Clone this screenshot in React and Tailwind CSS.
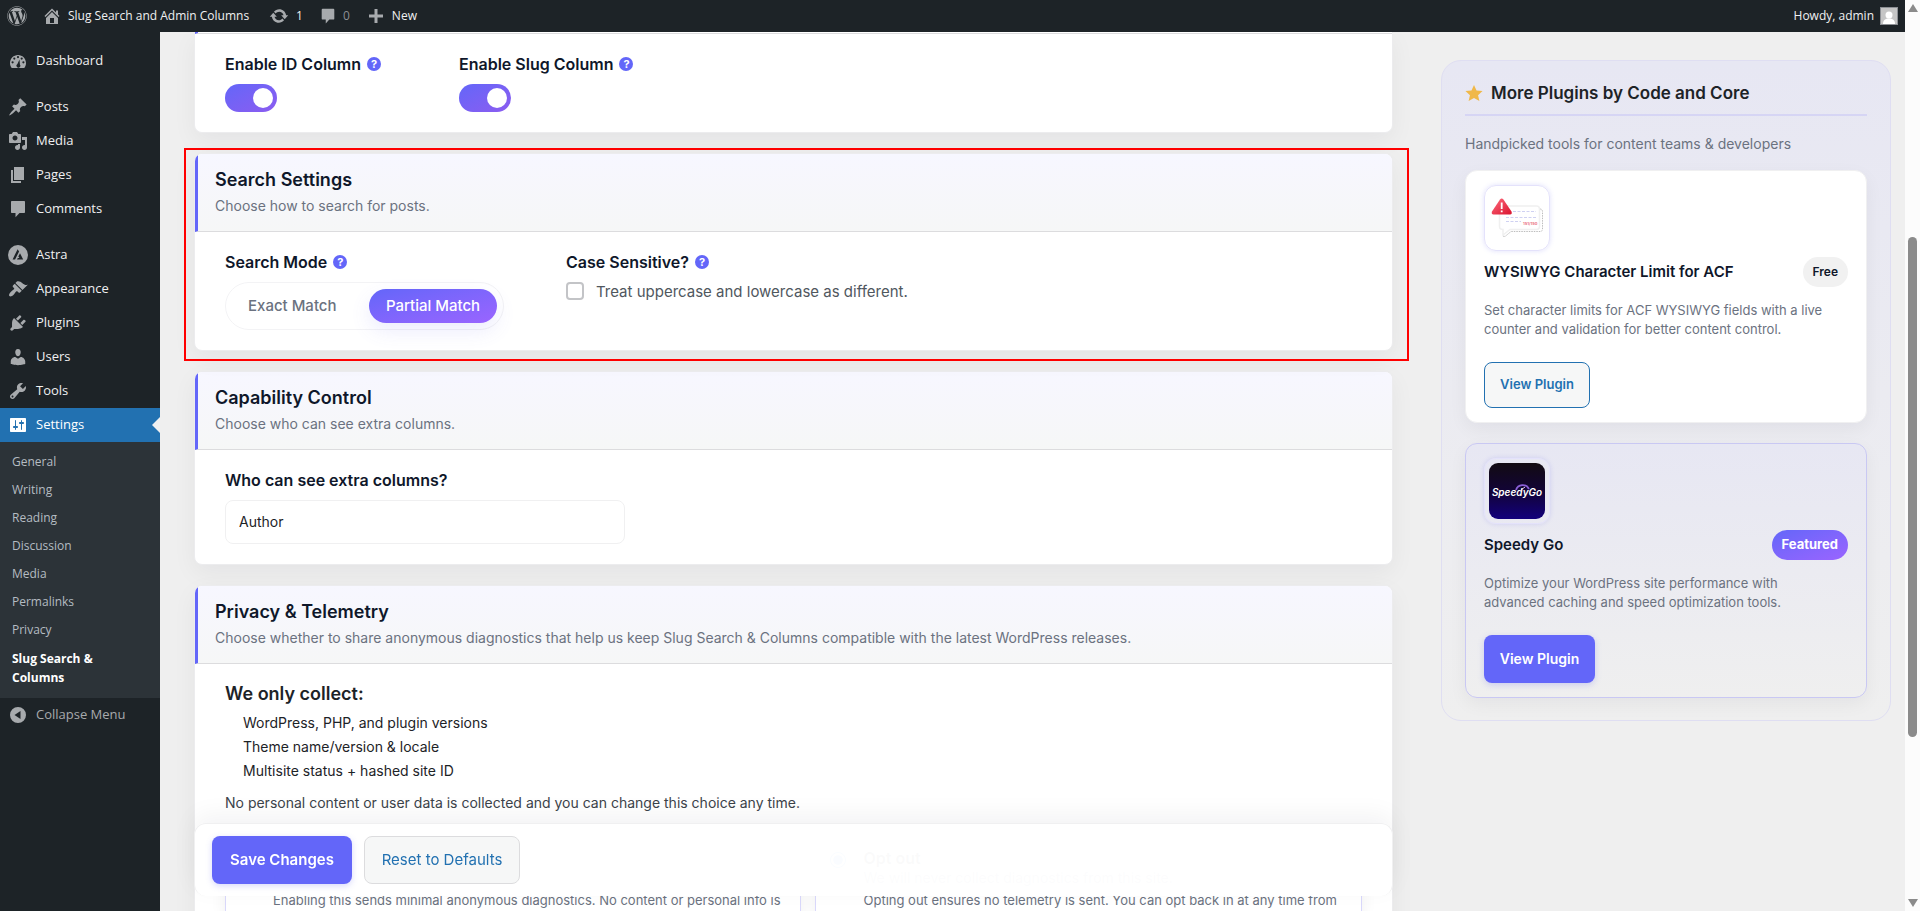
import { FaWordpress } from 'react-icons/fa';

// 20x20 admin glyphs, keyed by the menu entry that uses them
const ICONS = {
  home: 'M16 8.5l1.53 1.53-1.06 1.06L10 4.6l-6.47 6.49-1.06-1.06L10 2.5l4 4v-2h2v4zm-6-2.46l6 5.99V18H4v-5.97zM12 17v-5H8v5h4z',
  update: 'M10.2 3.28c3.53 0 6.43 2.61 6.92 6h2.08l-3.5 4-3.5-4h2.32c-.45-1.97-2.21-3.45-4.32-3.45-1.45 0-2.73.71-3.54 1.78L4.95 5.66C6.23 4.2 8.11 3.28 10.2 3.28zm-.4 13.44c-3.52 0-6.43-2.61-6.92-6H.8l3.5-4c1.17 1.33 2.33 2.67 3.5 4H5.48c.45 1.97 2.21 3.45 4.32 3.45 1.45 0 2.73-.71 3.54-1.78l1.71 1.95c-1.28 1.46-3.15 2.38-5.25 2.38z',
  plus: 'M17 8.5v3h-5.500v5.500h-3v-5.500H3v-3h5.500V3h3v5.500z',
  dashboard: 'M3.760 17h12.480C17.340 15.630 18 13.890 18 12c0-4.410-3.580-8-8-8s-8 3.590-8 8c0 1.890.66 3.630 1.760 5zM10 5a1.100 1.100 0 1 1 0 2.200A1.100 1.100 0 0 1 10 5zM6.300 6.500a1.100 1.100 0 1 1 0 2.200 1.100 1.100 0 0 1 0-2.200zM13.700 6.500a1.100 1.100 0 1 1 0 2.200 1.100 1.100 0 0 1 0-2.200zM4.600 10.200a1.100 1.100 0 1 1 0 2.200 1.100 1.100 0 0 1 0-2.200zM15.400 10.200a1.100 1.100 0 1 1 0 2.200 1.100 1.100 0 0 1 0-2.200zM11.500 8.500l.4 4.900a2 2 0 1 1-2.500-.4z',
  posts: 'M10.440 3.020l1.820-1.820 6.360 6.350-1.830 1.820c-1.050-.68-2.480-.57-3.410.36l-.75.75c-.92.93-1.040 2.350-.35 3.410l-1.830 1.820-2.410-2.410-2.800 2.790c-.42.42-3.380 2.710-3.800 2.290s1.860-3.390 2.280-3.810l2.790-2.790L4.100 9.360l1.830-1.820c1.050.69 2.480.57 3.400-.36l.75-.75c.93-.92 1.050-2.350.36-3.410z',
  media: 'M13 11V4c0-.55-.45-1-1-1h-1.670L9 1H5L3.670 3H2c-.55 0-1 .45-1 1v7c0 .55.45 1 1 1h10c.55 0 1-.45 1-1zM7 4.500c1.380 0 2.500 1.120 2.500 2.500S8.380 9.500 7 9.500 4.500 8.380 4.500 7 5.620 4.500 7 4.500zM14 6h5v10.500c0 1.380-1.120 2.500-2.500 2.500S14 17.880 14 16.500s1.120-2.500 2.500-2.500c.17 0 .34.02.5.05V9h-3V6zm-4 8.050V13h2v3.500c0 1.380-1.120 2.500-2.500 2.500S7 17.880 7 16.500 8.120 14 9.500 14c.17 0 .34.02.5.05z',
  pages: 'M6 15V2h10v13H6zm-1 1h8v2H3V5h2v11z',
  comments: 'M4 2h12c.6 0 1 .4 1 1v10c0 .6-.4 1-1 1h-4.500L7.500 18.300V14H4c-.6 0-1-.4-1-1V3c0-.6.4-1 1-1z',
  astra: 'M10 0a10 10 0 1 1 0 20 10 10 0 0 1 0-20zM9.600 4.200L4.600 14.400h2.500l4-8zM12 8.200l-1.700 3.400 1.200 1.300h-1.700l-.8 1.500h6.200z',
  appearance: 'M14.480 11.060L7.410 3.990l1.500-1.500c.5-.56 2.300-.47 3.510.32 1.210.8 1.430 1.280 2.910 2.100 1.180.64 2.450 1.260 4.450.85zm-.71.71L6.700 4.700 4.930 6.470c-.39.39-.39 1.020 0 1.410l1.060 1.060c.39.39.39 1.030 0 1.420-.6.6-1.430 1.110-2.210 1.690-.35.26-.7.53-1.010.84C1.430 14.230.4 16.080 1.400 17.070c.99 1 2.840-.03 4.180-1.360.31-.31.58-.66.85-1.020.57-.78 1.080-1.610 1.690-2.210.39-.39 1.020-.39 1.410 0l1.060 1.060c.39.39 1.020.39 1.410 0z',
  plugins: 'M13.110 4.360L9.870 7.600 8 5.730l3.240-3.240c.35-.34 1.050-.2 1.560.32.52.51.66 1.210.31 1.550zm-8 1.770l.91-1.120 9.010 9.010-1.190.84c-.71.71-2.630 1.160-3.820 1.160H6.140L4.900 17.260c-.59.59-1.540.59-2.120 0-.59-.58-.59-1.530 0-2.120l1.240-1.240v-3.880c0-1.130.4-3.190 1.090-3.890zm7.260 3.970l3.240-3.240c.34-.35 1.040-.21 1.550.31.52.51.66 1.210.31 1.550l-3.240 3.250z',
  users: 'M10 9.250c-2.270 0-2.730-3.440-2.730-3.440C7 4.020 7.820 2 9.970 2c2.160 0 2.980 2.020 2.710 3.810 0 0-.41 3.440-2.680 3.440zm0 2.570L12.720 10c2.390 0 4.520 2.330 4.520 4.530v2.490s-3.650 1.130-7.240 1.130c-3.650 0-7.240-1.130-7.240-1.130v-2.490c0-2.250 1.940-4.480 4.470-4.480z',
  tools: 'M16.680 9.770c-1.340 1.340-3.300 1.670-4.950.99l-5.410 6.520c-.99.99-2.590.99-3.580 0s-.99-2.590 0-3.570l6.520-5.420c-.68-1.650-.35-3.610.99-4.950 1.280-1.280 3.120-1.620 4.720-1.060l-2.890 2.890 2.820 2.820 2.860-2.870c.53 1.580.18 3.390-1.080 4.650zM3.810 16.210c.4.39 1.040.39 1.430 0 .4-.4.4-1.040 0-1.430-.39-.4-1.030-.4-1.430 0-.39.39-.39 1.030 0 1.430z',
  settings: 'M18 16V4c0-.55-.45-1-1-1H3c-.55 0-1 .45-1 1v12c0 .55.45 1 1 1h14c.55 0 1-.45 1-1zM8 11h1c.55 0 1 .45 1 1s-.45 1-1 1H8v1.500c0 .28-.22.5-.5.5s-.5-.22-.5-.5V13H6c-.55 0-1-.45-1-1s.45-1 1-1h1V5.500c0-.28.22-.5.5-.5s.5.22.5.5V11zm5-2h-1c-.55 0-1-.45-1-1s.45-1 1-1h1V5.500c0-.28.22-.5.5-.5s.5.22.5.5V7h1c.55 0 1 .45 1 1s-.45 1-1 1h-1v5.500c0 .28-.22.5-.5.5s-.5-.22-.5-.5V9z',
  collapse: 'M10 2a8 8 0 1 1 0 16 8 8 0 0 1 0-16zM12.500 6L6.500 10l6 4z',
  star: 'M10 1l2.800 6.200 6.700.7-5 4.500 1.500 6.600-6-3.400L4 19l1.500-6.600-5-4.500 6.700-.7z',
};

const MENU = [
  [{ icon: 'dashboard', label: 'Dashboard' }],
  [
    { icon: 'posts', label: 'Posts' },
    { icon: 'media', label: 'Media' },
    { icon: 'pages', label: 'Pages' },
    { icon: 'comments', label: 'Comments' },
  ],
  [
    { icon: 'astra', label: 'Astra' },
    { icon: 'appearance', label: 'Appearance' },
    { icon: 'plugins', label: 'Plugins' },
    { icon: 'users', label: 'Users' },
    { icon: 'tools', label: 'Tools' },
    { icon: 'settings', label: 'Settings', current: true },
  ],
];

const SUBMENU = ['General', 'Writing', 'Reading', 'Discussion', 'Media', 'Permalinks', 'Privacy'];

function Icon({ name, className = 'size-5' }) {
  return (
    <svg viewBox="0 0 20 20" className={`shrink-0 fill-current ${className}`} aria-hidden="true">
      <path fillRule="evenodd" d={ICONS[name]} />
    </svg>
  );
}

function AdminBar() {
  return (
    <header className="flex h-8 shrink-0 items-center bg-[#1d2327] px-[7px] text-xs text-[#f0f0f1]">
      <a href="#about" aria-label="About WordPress" className="mr-[15px] text-[#a7aaad]">
        <FaWordpress className="size-5" />
      </a>
      <a href="#site" className="mr-5 flex items-center gap-1.5">
        <Icon name="home" className="size-5 text-[#a7aaad]" />
        Slug Search and Admin Columns
      </a>
      <a href="#updates" className="mr-4 flex items-center gap-[7px]">
        <Icon name="update" className="size-5 text-[#a7aaad]" />
        1
      </a>
      <a href="#comments" className="mr-4 flex items-center gap-1.5 text-[#8c8f94]">
        <Icon name="comments" className="size-[18px] text-[#a7aaad]" />
        0
      </a>
      <a href="#new" className="flex items-center gap-1.5">
        <Icon name="plus" className="size-5 text-[#a7aaad]" />
        New
      </a>
      <a href="#profile" className="ml-auto flex items-center gap-1.5">
        Howdy, admin
        <svg viewBox="0 0 18 18" className="size-[18px]" aria-hidden="true">
          <rect width="18" height="18" fill="#8c8f94" />
          <rect x="1" y="1" width="16" height="16" fill="#c5c5c5" />
          <circle cx="9" cy="8" r="3.500" fill="#fff" />
          <path d="M3 17c0-4 2.500-5.500 6-5.500s6 1.500 6 5.500z" fill="#fff" />
        </svg>
      </a>
    </header>
  );
}

function AdminMenu() {
  return (
    <nav className="w-40 shrink-0 bg-[#1d2327] pt-3 text-[13px] text-[#f0f0f1]">
      <div className="flex flex-col gap-3">
        {MENU.map((group) => (
          <ul key={group[0].label}>
            {group.map(({ icon, label, current }) => (
              <li key={label}>
                <a
                  href="#menu"
                  className={`relative flex h-[34px] items-center gap-2 pl-2 ${current ? 'bg-[#2271b1] text-white' : ''}`}
                >
                  <Icon name={icon} className={current ? 'size-5 text-white' : 'size-5 text-[#a7aaad]'} />
                  {label}
                  {current && (
                    <span className="absolute right-0 border-y-8 border-r-8 border-y-transparent border-r-[#f0f0f1]" />
                  )}
                </a>
              </li>
            ))}
          </ul>
        ))}
      </div>
      <ul className="bg-[#2c3338] py-1.5 text-xs text-[#b5bcc2]">
        {SUBMENU.map((label) => (
          <li key={label}>
            <a href="#sub" className="flex h-7 items-center px-3">{label}</a>
          </li>
        ))}
        <li>
          <a href="#sub" className="block py-[5px] pr-10 pl-3 leading-[19px] font-bold text-white">
            Slug Search &amp; Columns
          </a>
        </li>
      </ul>
      <button type="button" className="flex h-[34px] items-center gap-2 pl-2 text-[#a7aaad]">
        <Icon name="collapse" />
        Collapse Menu
      </button>
    </nav>
  );
}

function Card({ title, subtitle, children }) {
  return (
    <section className="overflow-hidden rounded-lg border border-[#ececee] bg-white shadow-[0_8px_24px_rgba(15,23,42,0.05)]">
      <div className="border-b border-l-3 border-b-[#dcdcde] border-l-[#6366f9] bg-linear-to-b from-[#f7f7ff] to-[#f6f7f7] px-[17px] pt-3.5 pb-[15px]">
        <h2 className="text-lg leading-6 font-semibold text-[#0f172a]">{title}</h2>
        <p className="mt-1 text-sm leading-5 text-[#6b7280]">{subtitle}</p>
      </div>
      <div className="px-[30px] py-5">{children}</div>
    </section>
  );
}

function FieldLabel({ htmlFor, help = true, children }) {
  return (
    <div className="mb-2.5 flex h-5 items-center gap-1.5">
      <label htmlFor={htmlFor} className="text-base leading-5 font-semibold text-[#0f172a]">{children}</label>
      {help && (
        <span className="flex size-3.5 items-center justify-center rounded-full bg-[#6366f9] text-[11px] leading-none font-bold text-white">
          ?
        </span>
      )}
    </div>
  );
}

function Toggle({ id }) {
  return (
    <span className="relative block h-7 w-[52px] rounded-full bg-linear-to-br from-[#6366f9] to-[#8b5cf0]">
      <input id={id} type="checkbox" defaultChecked className="peer absolute inset-0 size-full cursor-pointer opacity-0" />
      <span className="pointer-events-none absolute top-1 right-1 size-5 rounded-full bg-white" />
    </span>
  );
}

function Consent({ id, title, lead, note, checked }) {
  return (
    <div className="flex gap-[17px] rounded-lg border border-[#d9d8fb] bg-white px-3.5 py-3 shadow-[0_4px_16px_rgba(15,23,42,0.06)]">
      <input id={id} type="radio" name="telemetry" defaultChecked={checked} className="mt-1.5 size-4 shrink-0" />
      <label htmlFor={id} className="block text-[13px] leading-5 text-[#6b7280]">
        <span className="block h-6 text-base leading-6 font-semibold text-[#0f172a]">{title}</span>
        <span className="mb-1 block h-4 text-sm leading-4">{lead}</span>
        <span className="block">{note}</span>
      </label>
    </div>
  );
}

function SettingsColumn() {
  return (
    <form className="relative flex min-w-0 flex-1 flex-col gap-5" onSubmit={(e) => e.preventDefault()}>
      {/* Columns card, its header scrolled under the admin bar */}
      <section className="rounded-b-lg border-x border-b border-[#ececee] bg-white shadow-[0_8px_24px_rgba(15,23,42,0.05)]">
        <div className="h-0.5 border-b border-l-3 border-b-[#dcdcde] border-l-[#6366f9]" />
        <div className="grid grid-cols-[234px_1fr] px-[30px] py-5">
          <div>
            <FieldLabel htmlFor="id-column">Enable ID Column</FieldLabel>
            <Toggle id="id-column" />
          </div>
          <div>
            <FieldLabel htmlFor="slug-column">Enable Slug Column</FieldLabel>
            <Toggle id="slug-column" />
          </div>
        </div>
      </section>

      <div className="relative">
        <Card title="Search Settings" subtitle="Choose how to search for posts.">
          <div className="grid grid-cols-[341px_1fr]">
            <div>
              <FieldLabel htmlFor="partial">Search Mode</FieldLabel>
              <div className="flex h-12 w-[279px] items-center justify-between rounded-full border border-[#f3f3f5] px-1.5 text-[15px] font-medium">
                <button type="button" className="h-[34px] px-4 text-[#6b7280]">Exact Match</button>
                <button
                  id="partial"
                  type="button"
                  className="h-[34px] w-32 rounded-full bg-linear-to-br from-[#6366f9] to-[#9a64ff] text-white shadow-[0_8px_20px_rgba(99,102,241,0.12)]"
                >
                  Partial Match
                </button>
              </div>
            </div>
            <div>
              <FieldLabel htmlFor="case-sensitive">Case Sensitive?</FieldLabel>
              <div className="flex gap-3 text-[15px] leading-5 text-[#50575e]">
                <input
                  id="case-sensitive"
                  type="checkbox"
                  className="size-[18px] appearance-none rounded border-2 border-[#c3c4c7] bg-white"
                />
                <label htmlFor="case-sensitive">Treat uppercase and lowercase as different.</label>
              </div>
            </div>
          </div>
        </Card>
        {/* highlight frame */}
        <div className="pointer-events-none absolute -top-[5px] -right-4 -bottom-2.5 -left-2.5 border-2 border-[#ff0000]" />
      </div>

      <Card title="Capability Control" subtitle="Choose who can see extra columns.">
        <FieldLabel htmlFor="capability" help={false}>Who can see extra columns?</FieldLabel>
        <select
          id="capability"
          className="block h-11 w-full max-w-[400px] appearance-none rounded-lg border border-[#f0f0f1] bg-white px-[13px] text-sm text-[#1d2327]"
        >
          <option>Author</option>
        </select>
      </Card>

      <Card
        title="Privacy & Telemetry"
        subtitle="Choose whether to share anonymous diagnostics that help us keep Slug Search & Columns compatible with the latest WordPress releases."
      >
        <h3 className="text-lg leading-5 font-semibold text-[#1d2327]">We only collect:</h3>
        <ul className="mt-[7px] pl-[18px] text-sm leading-6 text-[#1d2327]">
          <li>WordPress, PHP, and plugin versions</li>
          <li>Theme name/version &amp; locale</li>
          <li>Multisite status + hashed site ID</li>
        </ul>
        <p className="mt-2.5 text-sm leading-5 text-[#3c434a]">
          No personal content or user data is collected and you can change this choice any time.
        </p>
        <div className="mt-5 grid grid-cols-[577fr_547fr] gap-3.5">
          <Consent
            id="opt-in"
            note="Enabling this sends minimal anonymous diagnostics. No content or personal info is"
          />
          <Consent
            id="opt-out"
            checked
            title="Opt out"
            lead="We will never collect diagnostics from this site."
            note="Opting out ensures no telemetry is sent. You can opt back in at any time from"
          />
        </div>
      </Card>

      <div className="sticky bottom-[15px] z-10 flex h-[73px] shrink-0 items-center gap-3 rounded-xl border border-b-0 border-[#f0f0f1] bg-white/98 px-[17px] shadow-[0_-8px_24px_rgba(15,23,42,0.05)]">
        <button type="submit" className="h-12 w-[140px] rounded-lg bg-[#6366f9] text-[15px] font-semibold text-white shadow-[0_2px_6px_rgba(99,102,241,0.25)]">
          Save Changes
        </button>
        <button type="reset" className="h-12 w-[156px] rounded-lg border border-[#dcdcde] bg-[#f6f7f7] text-[15px] text-[#2271b1]">
          Reset to Defaults
        </button>
      </div>
    </form>
  );
}

function AcfLogo() {
  return (
    <svg viewBox="0 0 64 64" className="size-16" aria-hidden="true">
      <defs>
        <linearGradient id="warn" x1="0" y1="0" x2="1" y2="1">
          <stop offset="0" stopColor="#ff6b7d" />
          <stop offset="1" stopColor="#d9142f" />
        </linearGradient>
      </defs>
      <path d="M55 23q2.500 0 2.500 3v17q0 2.500-2.500 2.500H26l-6 5-2.500-.5" fill="none" stroke="#bdbdbd" strokeDasharray="1.500 1" />
      <path d="M18 20h33.500q3 0 3 3v17.500q0 3-3 3H25l-7 5.500v-5.500q-3.500 0-3.500-3V23q0-3 3.500-3z" fill="#fff" stroke="#f0f0f0" strokeWidth="1.500" />
      <g stroke="#cfd1f2" strokeDasharray="3 1.500">
        <path d="M28 25.500h23M21 31.500h30M21 35.500h15" />
      </g>
      <text x="38" y="39" fontSize="4" fontWeight="700" fill="#ea6f80">151/150</text>
      <path d="M15 13.500q1.700-2 3.400 0l8.100 12q1 3-1.500 3H8.500q-2.500 0-1.500-3z" fill="url(#warn)" />
      <path d="M16.700 16.500v6.500M16.700 24.500v1.800" stroke="#fff" strokeWidth="1.800" />
    </svg>
  );
}

function SpeedyGoLogo() {
  return (
    <svg viewBox="0 0 56 56" className="size-14" aria-hidden="true">
      <defs>
        <linearGradient id="night" x1="0" y1="0" x2="0" y2="1">
          <stop offset="0" stopColor="#120b12" />
          <stop offset="0.500" stopColor="#120436" />
          <stop offset="1" stopColor="#12007c" />
        </linearGradient>
      </defs>
      <rect width="56" height="56" rx="9" fill="url(#night)" />
      <path d="M27 27a7 7 0 0 1 13-1" fill="none" stroke="#8a5fd6" strokeWidth="1.800" />
      <path d="M32 27l4-3" stroke="#d9c8f5" />
      <text x="28" y="33" textAnchor="middle" fontSize="10" fontWeight="600" fontStyle="italic" fill="#fff">SpeedyGo</text>
    </svg>
  );
}

const PLUGINS = [
  {
    name: 'WYSIWYG Character Limit for ACF',
    badge: 'Free',
    logo: AcfLogo,
    text: 'Set character limits for ACF WYSIWYG fields with a live counter and validation for better content control.',
  },
  {
    name: 'Speedy Go',
    badge: 'Featured',
    featured: true,
    logo: SpeedyGoLogo,
    text: 'Optimize your WordPress site performance with advanced caching and speed optimization tools.',
  },
];

function PluginCard({ name, badge, featured, logo: Logo, text }) {
  return (
    <article
      className={`rounded-xl border px-[18px] py-3.5 shadow-[0_6px_18px_rgba(15,23,42,0.05)] ${
        featured ? 'border-[#c9c8f3] bg-linear-to-b from-[#e7e7f3] to-[#efefef]' : 'border-[#f0f0f1] bg-white'
      }`}
    >
      <div className="flex size-[66px] items-center justify-center rounded-xl border border-[#e4e2fb] shadow-[0_0_5px_rgba(99,102,241,0.2)]">
        <Logo />
      </div>
      <div className="mt-1.5 flex h-[30px] items-center justify-between">
        <h3 className="text-[15px] font-semibold text-[#0f172a]">{name}</h3>
        <span
          className={`flex h-[30px] items-center rounded-full px-2.5 ${
            featured ? 'bg-linear-to-br from-[#6366f9] to-[#9a64ff] text-[13px] font-bold text-white' : 'bg-[#f1f1f1] text-xs font-semibold text-[#0f172a]'
          }`}
        >
          {badge}
        </span>
      </div>
      <p className="mt-3.5 max-w-[350px] text-[13px] leading-[19px] text-[#6b7280]">{text}</p>
      {featured ? (
        <button type="button" className="mt-[23px] block h-12 w-[111px] rounded-lg bg-[#6366f9] text-sm font-semibold text-white shadow-[0_2px_6px_rgba(99,102,241,0.25)]">
          View Plugin
        </button>
      ) : (
        <button type="button" className="mt-[23px] block h-[46px] w-[106px] rounded-lg border border-[#2271b1] bg-[#f6f7f7] text-[13px] font-semibold text-[#2271b1]">
          View Plugin
        </button>
      )}
    </article>
  );
}

function PluginsPanel() {
  return (
    <aside className="mt-7 w-[450px] shrink-0 self-start rounded-[20px] border border-[#dfdef2] bg-linear-to-b from-[#e7e7f3] to-[#efefef] px-[23px] pt-[19px] pb-[22px]">
      <h2 className="flex items-center gap-2 border-b-2 border-[#d6d5f4] pb-2 text-[17px] leading-[26px] font-semibold text-[#1d2327]">
        <Icon name="star" className="size-[18px] text-[#f0b849]" />
        More Plugins by Code and Core
      </h2>
      <p className="mt-[18px] mb-4 text-sm leading-5 text-[#6b7280]">
        Handpicked tools for content teams &amp; developers
      </p>
      <div className="flex flex-col gap-5">
        {PLUGINS.map((plugin) => (
          <PluginCard key={plugin.name} {...plugin} />
        ))}
      </div>
    </aside>
  );
}

function ScrollTrack() {
  return (
    <div className="flex w-[15px] shrink-0 flex-col items-center bg-[#fcfcfc] py-1" aria-hidden="true">
      <span className="border-x-5 border-b-8 border-x-transparent border-b-[#8b8b8b]" />
      <span className="mt-[225px] h-[500px] w-[9px] rounded-full bg-[#8b8b8b]" />
      <span className="mt-auto border-x-5 border-t-8 border-x-transparent border-t-[#8b8b8b]" />
    </div>
  );
}

export default function App() {
  return (
    <div className="flex h-screen overflow-hidden bg-[#f0f0f1] font-['Open_Sans',sans-serif]">
      <div className="flex min-w-0 flex-1 flex-col">
        <AdminBar />
        <div className="flex min-h-0 flex-1">
          <AdminMenu />
          <main className="flex min-w-0 flex-1 items-start gap-12 overflow-hidden bg-[#efefef] pr-3.5 pl-[34px] font-[Inter,sans-serif]">
            <SettingsColumn />
            <PluginsPanel />
          </main>
        </div>
      </div>
      <ScrollTrack />
    </div>
  );
}
